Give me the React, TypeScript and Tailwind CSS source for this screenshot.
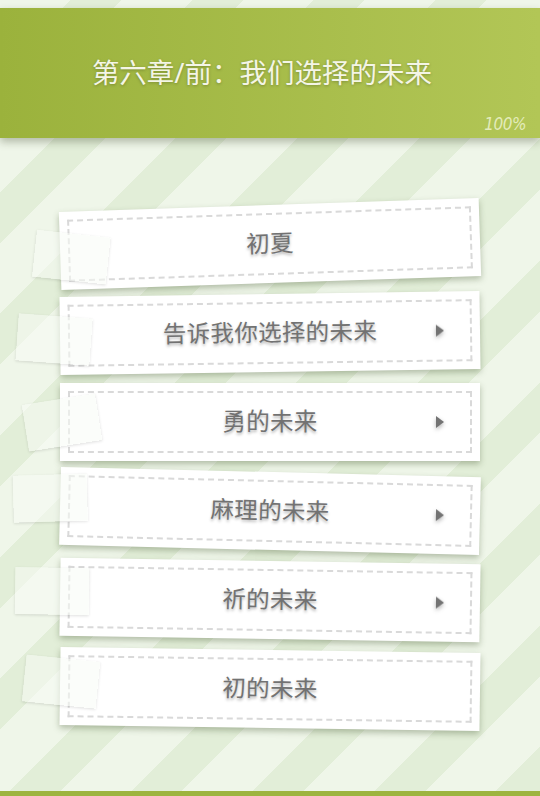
import React from "react";

type Chapter = {
  title: string;
  arrow: boolean;
  tilt: string;
  tape: string;
};

const chapters: Chapter[] = [
  { title: "初夏", arrow: false, tilt: "-rotate-[1.9deg]", tape: "left-[-26px] top-[22px] rotate-[8deg]" },
  { title: "告诉我你选择的未来", arrow: true, tilt: "-rotate-[0.8deg]", tape: "left-[-43px] top-[19px] rotate-[5deg]" },
  { title: "勇的未来", arrow: true, tilt: "rotate-0", tape: "left-[-35px] top-[16px] -rotate-[9deg]" },
  { title: "麻理的未来", arrow: true, tilt: "rotate-[1.4deg]", tape: "left-[-47px] top-[8px] -rotate-[3deg]" },
  { title: "祈的未来", arrow: true, tilt: "rotate-[0.9deg]", tape: "left-[-45px] top-[10px] rotate-0" },
  { title: "初的未来", arrow: false, tilt: "rotate-[0.8deg]", tape: "left-[-36px] top-[11px] rotate-[5deg]" },
];

function ChapterCard({ item }: { item: Chapter }) {
  return (
    <div
      className={`relative ml-[60px] h-[78px] w-[420px] bg-white shadow-[0_3px_6px_rgba(60,80,40,0.35)] ${item.tilt}`}
    >
      <div className="absolute inset-[8px] border-2 border-dashed border-[#d9d9d9]" />
      <div className="relative flex h-full items-center justify-center">
        <span className="text-[23.5px] font-normal tracking-[0.3px] text-[#727272] [text-shadow:0_2px_3px_rgba(0,0,0,0.3)]">
          {item.title}
        </span>
        {item.arrow && (
          <span className="absolute right-[36px] top-1/2 -translate-y-1/2 border-y-[6px] border-l-[8px] border-y-transparent border-l-[#737373] [filter:drop-shadow(0_2px_2px_rgba(0,0,0,0.3))]" />
        )}
      </div>
      {/* translucent tape tab on the left edge */}
      <div
        className={`absolute h-[47px] w-[74px] bg-[rgba(248,252,245,0.55)] shadow-[0_1px_3px_rgba(0,0,0,0.12)] ${item.tape}`}
      />
    </div>
  );
}

export default function App() {
  return (
    <div
      className="flex h-[796px] w-full flex-col overflow-hidden bg-[#eef5e7] bg-[repeating-linear-gradient(135deg,#eff6e9_0px,#eff6e9_50px,#e2eed8_50px,#e2eed8_86px)]"
      style={{ fontFamily: '"Noto Sans", "Noto Sans CJK SC", sans-serif' }}
    >
      <div className="relative mt-2 flex h-[130px] shrink-0 items-center justify-center bg-gradient-to-r from-[#9bb23c] to-[#b2c656] shadow-[0_4px_8px_rgba(40,50,20,0.3)]">
        <h1 className="mr-4 text-[27.5px] font-normal text-[#f4f5e6] [text-shadow:0_1px_3px_rgba(0,0,0,0.25)]">
          第六章/前：我们选择的未来
        </h1>
        <span
          className="absolute bottom-[5px] right-[14px] text-[17px] italic leading-none tracking-[-0.5px] text-[#e3ebba]"
          style={{ fontFamily: '"DejaVu Sans Condensed", "Liberation Sans Narrow", sans-serif', fontWeight: 200 }}
        >
          100%
        </span>
      </div>

      <div className="mt-[67px] flex flex-col gap-[11px]">
        {chapters.map((c) => (
          <ChapterCard key={c.title} item={c} />
        ))}
      </div>

      <div className="mt-auto h-[5px] shrink-0 bg-[#9db43f]" />
    </div>
  );
}
